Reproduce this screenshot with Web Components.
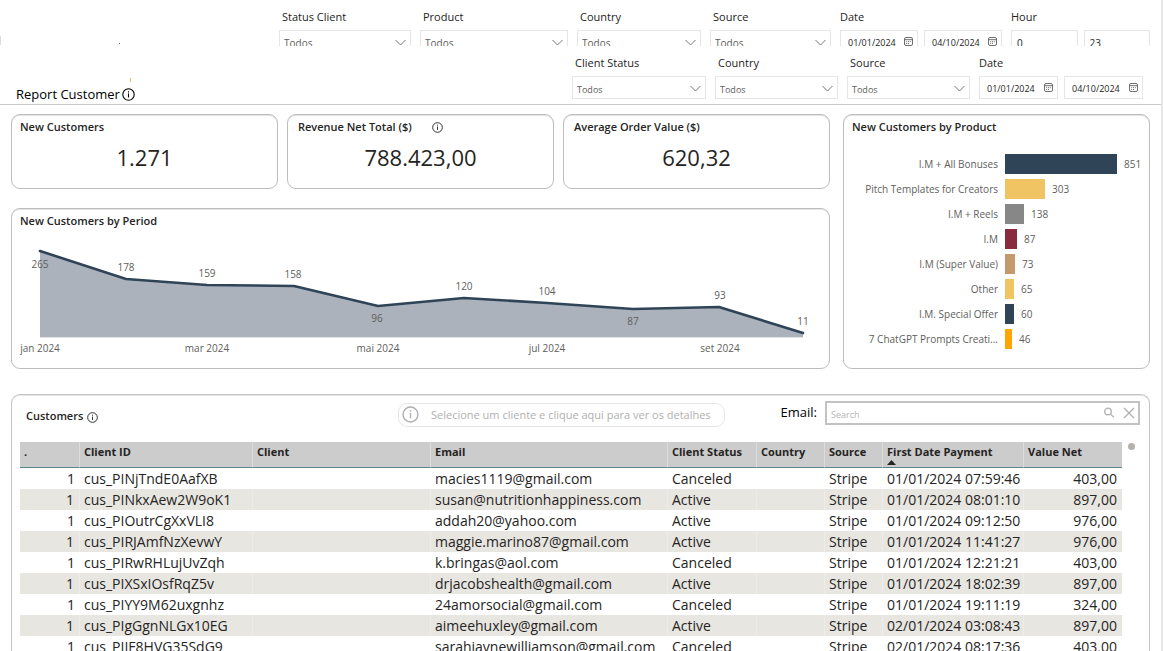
<!DOCTYPE html>
<html lang="pt-BR">
<head>
<meta charset="utf-8">
<title>Report Customer</title>
<style>
body { margin: 0; background: #fff; color: #252423; font-family: "Open Sans", "Noto Sans", sans-serif; }
</style>
</head>
<body>
<customer-report></customer-report>
<script>
function define(name, render) {
  customElements.define(name, class extends HTMLElement {
    connectedCallback() {
      if (this.shadowRoot) return;
      this.attachShadow({ mode: 'open' }).innerHTML = render(this);
    }
  });
}

/* Circled "i", drawn at the size of its host */
define('info-icon', () => `
<style>:host{display:inline-block;width:13px;height:13px;flex:none} svg{display:block;width:100%;height:100%}</style>
<svg viewBox="0 0 13 13" fill="none" stroke="currentColor" stroke-width="1.1" aria-hidden="true">
<circle cx="6.5" cy="6.5" r="5.7"/><path d="M6.5 5.4v4M6.5 3.2v1.2"/></svg>`);

define('select-filter', el => `
<style>
:host{display:block;flex:none}
label{display:block;height:22px;line-height:18px;padding-left:3px;font-size:11px;font-weight:500;box-sizing:border-box}
.box{position:relative}
select{display:block;width:100%;height:23px;box-sizing:border-box;border:1px solid #e6e6e6;border-radius:0;background:#fff;
appearance:none;padding:3px 4px 0;font:var(--option-size,9px) "Open Sans","Noto Sans",sans-serif;color:#605e5c}
svg{position:absolute;right:5px;top:9px;width:11px;height:7px;pointer-events:none}
</style>
<label for="s">${el.getAttribute('label')}</label>
<div class="box"><select id="s"><option>Todos</option></select>
<svg viewBox="0 0 11 7" fill="none" stroke="#777" aria-hidden="true"><path d="M.5 1l5 5 5-5"/></svg></div>`);

define('range-filter', el => {
  const date = el.hasAttribute('date');
  const label = el.getAttribute('label');
  const cal = `<svg viewBox="0 0 9 9" fill="none" stroke="#605e5c" stroke-width=".9" aria-hidden="true"><rect x=".5" y=".5" width="8" height="8" rx="1.5"/><path d="M.5 2.7h8"/><path d="M2.200 4.700h5M2.200 6.500h3.600" stroke-dasharray="1 .8"/></svg>`;
  return `
<style>
:host{display:block;flex:none}
fieldset{border:0;margin:0;padding:0;min-width:0}
legend{display:block;height:22px;line-height:18px;padding:0;font-size:11px;font-weight:500}
.row{display:grid;grid-template-columns:1fr 1fr;gap:6px}
.box{position:relative}
input{display:block;width:100%;height:23px;box-sizing:border-box;border:1px solid #e6e6e6;border-radius:0;background:#fff;
padding:2px ${date ? 7 : 5}px 0;font:${date ? 9 : 10}px "Open Sans","Noto Sans",sans-serif;color:#252423}
svg{position:absolute;right:5px;top:7px;width:9px;height:9px}
</style>
<fieldset><legend>${label}</legend><div class="row">
${['from', 'to'].map(k => `<div class="box"><input aria-label="${label} ${k}" value="${el.getAttribute(k)}">${date ? cal : ''}</div>`).join('')}
</div></fieldset>`;
});

define('top-filters', () => `
<style>
:host{display:flex;justify-content:flex-end;gap:9px;height:46px;box-sizing:border-box;padding:8px 11px 0 0;overflow:hidden;position:relative;--option-size:10px}
.marks{position:absolute;left:0;top:36px;width:130px;height:10px}
</style>
<svg class="marks" viewBox="0 0 130 10" aria-hidden="true"><path d="M0 0h1v9H0z" fill="#ddd"/><path d="M119 7h1v1h-1z" fill="#555"/></svg>
<select-filter label="Status Client" style="width:132px"></select-filter>
<select-filter label="Product" style="width:148px"></select-filter>
<select-filter label="Country" style="width:124px"></select-filter>
<select-filter label="Source" style="width:121px"></select-filter>
<range-filter label="Date" date from="01/01/2024" to="04/10/2024" style="width:162px"></range-filter>
<range-filter label="Hour" from="0" to="23" style="width:139px"></range-filter>`);

define('report-header', () => `
<style>
:host{display:flex;gap:9px;height:59px;box-sizing:border-box;padding:8px 18px 0 16px;border-bottom:1px solid #c8c8c8}
h1{display:flex;align-items:center;gap:2px;align-self:flex-end;margin:0 auto 0 0;font-size:13px;line-height:20px;font-weight:400;color:#000;position:relative}
.mark{position:absolute;left:114px;top:-6px;width:1px;height:4px;background:#efc050}
</style>
<h1>Report Customer <info-icon></info-icon><i class="mark"></i></h1>
<select-filter label="Client Status" style="width:134px"></select-filter>
<select-filter label="Country" style="width:123px"></select-filter>
<select-filter label="Source" style="width:123px"></select-filter>
<range-filter label="Date" date from="01/01/2024" to="04/10/2024" style="width:164px"></range-filter>`);

define('report-card', el => `
<style>
:host{display:block;box-sizing:border-box;min-width:0;border:1px solid #bdbdbd;border-radius:9px;background:#fff;box-shadow:inset 0 1px #e4e4e4}
h2{display:flex;align-items:center;gap:20px;margin:0;padding:3px var(--title-inset,8px) 0;font-size:11px;line-height:18px;font-weight:600}
info-icon{width:11px;height:11px}
</style>
<h2>${el.getAttribute('heading')}${el.hasAttribute('info') ? '<info-icon></info-icon>' : ''}</h2><slot></slot>`);

define('kpi-value', () => `
<style>:host{display:block;height:52px;line-height:42px;text-align:center;font-size:22px}</style><slot></slot>`);

define('area-chart', () => {
  const pts = [[28,16],[114,44],[195,50],[282,51],[366,71],[452,63],[535,68],[621,74],[707,72],[791,98]];
  const line = pts.map(p => p.join(' ')).join('L');
  const labels = [[28,33,265],[114,36,178],[195,42,159],[281,43,158],[365,87,96],[452,55,120],[535,60,104],[621,90,87],[708,64,93],[791,90,11]];
  const months = [[28,'jan 2024'],[195,'mar 2024'],[366,'mai 2024'],[535,'jul 2024'],[708,'set 2024']];
  return `
<style>:host{display:block;margin-top:5px} svg{display:block;width:100%} text{font-size:10px;fill:#605e5c;text-anchor:middle}</style>
<svg viewBox="0 0 817 133" role="img" aria-label="New customers by period">
<path d="M${line}V102H28Z" fill="#abb2bb"/><path d="M28 102.500H791" stroke="#e4e4e4"/>
<path d="M${line}" fill="none" stroke="#2f4457" stroke-width="2.6" stroke-linejoin="round" stroke-linecap="round"/>
${labels.map(([x, y, t]) => `<text x="${x}" y="${y}">${t}</text>`).join('')}
${months.map(([x, t]) => `<text x="${x}" y="117">${t}</text>`).join('')}
</svg>`;
});

define('bar-chart', () => {
  const rows = [['I.M + All Bonuses',851,112,'#2f4457'],['Pitch Templates for Creators',303,40,'#f0c462'],['I.M + Reels',138,19,'#878787'],
    ['I.M',87,12,'#8b2a3c'],['I.M (Super Value)',73,10,'#c49a6c'],['Other',65,9,'#f0c462'],['I.M. Special Offer',60,9,'#2f4457'],['7 ChatGPT Prompts Creati...',46,7,'#ffa500']];
  return `
<style>
:host{display:block;padding:15px 0 16px;font-size:10px;line-height:24px;color:#605e5c}
ul{list-style:none;margin:0;padding:0}
li{display:grid;grid-template-columns:154px auto 1fr;align-items:center;height:25px;column-gap:7px}
.name{text-align:right;white-space:nowrap}
.bar{height:20px}
</style>
<ul>${rows.map(([n, v, w, c]) => `<li><span class="name">${n}</span><span class="bar" style="width:${w}px;background:${c}"></span><span>${v}</span></li>`).join('')}</ul>`;
});

define('customer-table', () => {
  const cols = [[60,'.'],[173,'Client ID'],[178,'Client'],[237,'Email'],[89,'Client Status'],[68,'Country'],[58,'Source'],[141,'First Date Payment'],[98,'Value Net']];
  const rows = [
    ['cus_PINjTndE0AafXB','macies1119@gmail.com','Canceled','01/01/2024 07:59:46','403,00'],
    ['cus_PINkxAew2W9oK1','susan@nutritionhappiness.com','Active','01/01/2024 08:01:10','897,00'],
    ['cus_PIOutrCgXxVLI8','addah20@yahoo.com','Active','01/01/2024 09:12:50','976,00'],
    ['cus_PIRJAmfNzXevwY','maggie.marino87@gmail.com','Active','01/01/2024 11:41:27','976,00'],
    ['cus_PIRwRHLujUvZqh','k.bringas@aol.com','Canceled','01/01/2024 12:21:21','403,00'],
    ['cus_PIXSxIOsfRqZ5v','drjacobshealth@gmail.com','Active','01/01/2024 18:02:39','897,00'],
    ['cus_PIYY9M62uxgnhz','24amorsocial@gmail.com','Canceled','01/01/2024 19:11:19','324,00'],
    ['cus_PIgGgnNLGx10EG','aimeehuxley@gmail.com','Active','02/01/2024 03:08:43','897,00'],
    ['cus_PIIF8HVG35SdG9','sarahjaynewilliamson@gmail.com','Canceled','02/01/2024 08:17:36','403,00']];
  return `
<style>
:host{display:block}
table{width:100%;table-layout:fixed;border-collapse:separate;border-spacing:0}
th,td{padding:0 4px;text-align:left;white-space:nowrap;box-sizing:border-box}
th{position:relative;height:26px;vertical-align:top;background:#ccc;border-bottom:1px solid #5b8490;font-size:11px;line-height:20px;font-weight:700}
th:not(:last-child){border-right:1px solid #dcdcdc}
tbody tr:nth-child(even) td:not(:last-child){border-right:1px solid #edece8}
td{height:21px;font-size:14px;line-height:21px}
tbody tr:nth-child(even){background:#e8e6e1}
td:first-child,td:last-child{text-align:right;padding-right:5px}
.sort{position:absolute;left:4px;top:18px;width:9px;height:5px}
</style>
<table><colgroup>${cols.map(([w]) => `<col style="width:${w}px">`).join('')}</colgroup>
<thead><tr>${cols.map(([, t]) => `<th scope="col">${t}${t.startsWith('First') ? '<svg class="sort" viewBox="0 0 9 5" aria-hidden="true"><path d="M0 5L4.500 0 9 5z" fill="#252423"/></svg>' : ''}</th>`).join('')}</tr></thead>
<tbody>${rows.map(([id, mail, st, d, v]) => `<tr><td>1</td><td>${id}</td><td></td><td>${mail}</td><td>${st}</td><td></td><td>Stripe</td><td>${d}</td><td>${v}</td></tr>`).join('')}</tbody></table>`;
});

define('email-search', () => `
<style>
:host{display:flex;align-items:center;gap:8px}
label{font-size:13px;line-height:20px;color:#000;padding-bottom:2px}
.box{display:flex;align-items:center;gap:8px;box-sizing:border-box;width:315px;height:24px;border:2px solid #c2c2c2;padding:0 3px}
input{flex:1;min-width:0;border:0;outline:0;padding:2px 0 0 1px;background:none;font:9px "Open Sans","Noto Sans",sans-serif}
input::placeholder{color:#b5b5b5;opacity:1}
button{display:block;border:0;background:none;padding:0;margin:0;width:12px;height:12px}
svg{display:block;width:12px;height:12px}
</style>
<label for="q">Email:</label>
<div class="box"><input id="q" placeholder="Search">
<button aria-label="Search"><svg viewBox="0 0 12 12" fill="none" stroke="#b5b5b5" stroke-width="1.4"><circle cx="5" cy="4.500" r="3.300"/><path d="M7.500 7l3.300 3.300"/></svg></button>
<button aria-label="Clear"><svg viewBox="0 0 12 12" fill="none" stroke="#b0b0b0" stroke-width="1.300"><path d="M1 1l10 10M11 1L1 11"/></svg></button></div>`);

define('customers-panel', () => `
<style>
:host{display:block;box-sizing:border-box;min-height:0;overflow:hidden;border:1px solid #c4c4c4;border-bottom:0;border-radius:9px 9px 0 0;box-shadow:inset 0 1px #e4e4e4;padding:5px 9px 0 8px}
header{display:flex;align-items:center;height:26px}
h2{display:flex;align-items:center;gap:4px;flex:none;width:378px;box-sizing:border-box;margin:0;padding:5px 0 0 6px;font-size:11px;line-height:18px;font-weight:600}
h2 info-icon{width:11px;height:11px;margin-top:3px}
.hint{display:flex;align-items:center;gap:12px;box-sizing:border-box;height:24px;width:327px;margin-top:3px;padding:0 3px;border:1px solid #e6e6e6;border-radius:9px;background:#fff;font:11px "Open Sans","Noto Sans",sans-serif;color:#b0b0b0;white-space:nowrap}
.hint info-icon{width:17px;height:17px}
email-search{margin-left:auto}
.body{display:flex;align-items:flex-start;gap:9px;margin-top:16px}
customer-table{flex:1;min-width:0}
.thumb{width:7px;height:7px;border-radius:4px;background:#b3b0ad;margin:1px 5px 0 0}
</style>
<header><h2>Customers <info-icon></info-icon></h2>
<button class="hint"><info-icon></info-icon>Selecione um cliente e clique aqui para ver os detalhes</button>
<email-search></email-search></header>
<div class="body"><customer-table></customer-table><div class="thumb"></div></div>`);

define('customer-report', () => `
<style>
:host{display:flex;flex-direction:column;height:100vh;box-sizing:border-box;overflow:hidden;border-right:2px solid #e6e6e6}
top-filters,report-header{flex:none}
main{flex:1;min-height:0;display:grid;grid-template:auto minmax(0,1fr) / minmax(0,1fr) 307px;gap:25px 13px;padding:9px 11px 0}
.left{display:flex;flex-direction:column;gap:19px;min-width:0}
.kpis{display:grid;grid-template-columns:repeat(3,minmax(0,1fr));gap:9px}
.kpis report-card:not(:first-child){--title-inset:10px}
customers-panel{grid-column:1 / -1}
</style>
<top-filters></top-filters>
<report-header></report-header>
<main>
<div class="left">
<div class="kpis">
<report-card heading="New Customers"><kpi-value>1.271</kpi-value></report-card>
<report-card heading="Revenue Net Total ($)" info><kpi-value>788.423,00</kpi-value></report-card>
<report-card heading="Average Order Value ($)"><kpi-value>620,32</kpi-value></report-card>
</div>
<report-card heading="New Customers by Period"><area-chart></area-chart></report-card>
</div>
<report-card heading="New Customers by Product"><bar-chart></bar-chart></report-card>
<customers-panel></customers-panel>
</main>`);
</script>
</body>
</html>
